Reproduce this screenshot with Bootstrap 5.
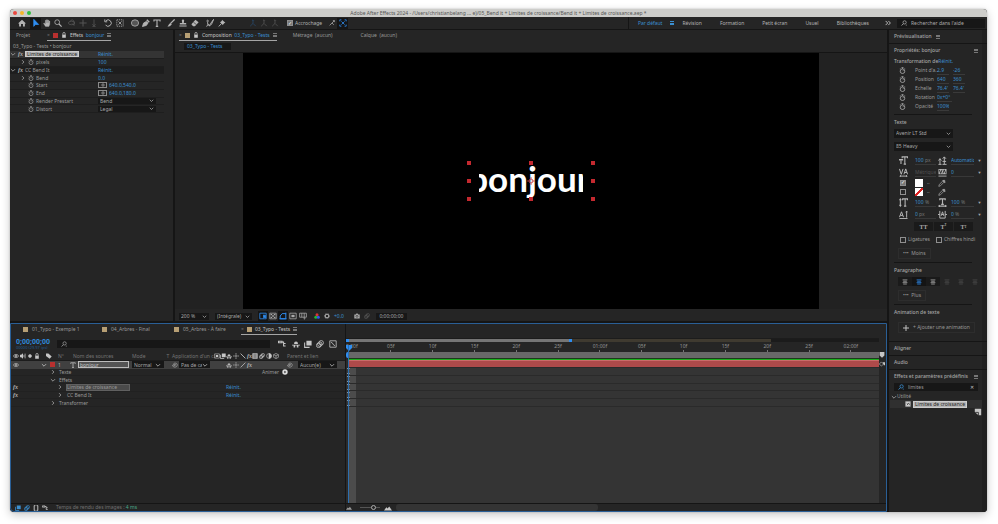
<!DOCTYPE html>
<html lang="fr">
<head>
<meta charset="utf-8">
<meta name="viewport" content="width=device-width, initial-scale=1">
<title>Adobe After Effects 2024</title>
<link href="https://cdn.jsdelivr.net/npm/bootstrap@5.3.0/dist/css/bootstrap.min.css" rel="stylesheet">
<style>
:root{--panel:#252525;--edge:#151515;--ink:#9a9a9a;--hi:#c6c6c6;--blue:#3b8fd0;--field:#171717}
html,body{height:100%}
body{background:#fff;padding:9px 11px 12px 10px;font:5px/7px "Noto Sans","Open Sans",sans-serif;color:var(--ink);overflow:hidden;white-space:nowrap}
button,input,select{font:inherit;color:inherit;background:none;border:0;padding:0;margin:0;border-radius:0;line-height:inherit}
button,.tool{display:inline-flex;align-items:center;justify-content:center}
a{color:inherit;text-decoration:none}
svg{width:8px;height:8px;fill:none;stroke:currentColor;stroke-width:1;flex:none;display:block}
svg.sm{width:6px;height:6px}
.window{height:100%;min-height:400px;border-radius:4px;overflow:hidden;background:var(--edge);box-shadow:0 0 2px rgba(0,0,0,.25),0 3px 10px rgba(0,0,0,.22)}
.titlebar{height:8px;background:#cdcdca;color:#555;line-height:8px;position:relative}
.lights{position:absolute;left:3px;top:2px;display:flex;gap:3px}
.lights i{width:4px;height:4px;border-radius:2px;background:#e9473f}
.lights i:nth-child(2){background:#f5b62b}
.lights i:nth-child(3){background:#2fbd3f}
.toolbar{height:12px;background:var(--panel);margin-bottom:1px;padding-left:6px;color:#b4b4b4}
.toolset{display:flex;margin-right:3px}
.tool{width:11px;height:11px}
.wide .tool{width:12px}
.tool.dim{color:#555}
.tool.on{background:var(--edge);color:#2f8df0}
.deep{color:#27496c}
.burger{width:4px;height:4px;color:#777;border-top:1px solid;border-bottom:1px solid;background:linear-gradient(currentColor,currentColor) center/4px 1px no-repeat;flex:none;display:inline-block}
.blue{color:var(--blue)}
.hi{color:var(--hi)}
.dimtext{color:#707070}
.tick{appearance:none;width:6px;height:6px;border:1px solid #8f8f8f;flex:none;display:flex;align-items:center;justify-content:center}
.tick:checked{background:#777}
.tick:checked::before{content:"✓";color:#fff;font:700 5px/5px "DejaVu Sans",sans-serif}
.workspaces{border-left:1px solid var(--edge);height:12px;padding-left:9px}
.workspaces a{margin-right:18px}
.workspaces a:last-child{margin-right:13px}
.helpbox{background:var(--field);width:88px;height:9px;color:#aaa;margin-right:2px}
.helpbox input,.finder input{width:100%;min-width:0;outline:0}
input::placeholder{color:inherit;opacity:1}
.desk{flex:1 1 0;min-height:0;display:grid;grid-template-columns:minmax(0,1fr) 98px;column-gap:2px}
.stage{display:grid;grid-template-rows:minmax(0,1fr) 189px;row-gap:2px;min-height:0}
.upper{display:grid;grid-template-columns:163px minmax(0,1fr);column-gap:2px;min-height:0}
.pane{background:var(--panel);min-height:0;min-width:0;overflow:hidden}
.tabs{height:11px;display:flex}
.tab-on{display:flex;align-items:center;gap:3px;color:var(--hi);border-bottom:1px solid #a5a5a5}
.swatch{width:5px;height:5px;background:#b79f74;flex:none}
.swatch.red{background:#b8302f}
.props{display:grid;grid-auto-rows:1fr;height:62px;margin-right:9px;line-height:6px}
.prop{display:grid;grid-template-columns:88px 1fr;align-items:center;border-bottom:1px solid #1e1e1e;min-height:0}
.prop.sel{background:#343434}
.prop.fxhead{background:#1d1d1d}
.prop > div{display:flex;align-items:center;gap:2px;min-height:0}
.prop .drop{height:6px}
.prop .chip{line-height:4px}
.chip{background:#b4b4b4;color:#262626;border:1px solid #ccc;padding:0 1px;line-height:5px}
.xy{width:9px;height:6px;border:1px solid #8a8a8a;color:#aaa}
.xy svg{width:4px;height:4px}
.num{color:var(--blue);width:30px}
.ind{padding-left:10px}
select{appearance:none;outline:0}
.drop{display:inline-flex;align-items:center;background:var(--field);color:#a8a8a8;height:7px;padding:0 2px}
.drop select{flex:1;min-width:0;width:100%}
.drop svg{width:5px;height:5px}
.crumb{height:12px;border-bottom:1px solid var(--edge);padding-left:9px}
.crumb a{background:var(--field);width:47px;padding-left:3px;height:7px}
.viewer{flex:1 1 0;min-height:0;padding:0 68px;background:#222}
.comp{background:#000;height:100%}
.picked{position:relative;width:124px;height:36px}
.picked > i{position:absolute;width:4px;height:4px;background:#c4292f;transform:translate(-50%,-50%)}
.word{width:104px;height:48px;overflow:hidden;display:flex;justify-content:center;padding-right:4px;font:700 35px/42px Lato,"Open Sans",sans-serif;color:#fff}
.viewbar{height:12px;padding:2px 0 0 4px;gap:6px;color:#aaa}
.timeline{background:var(--panel);border:1px solid #2a5f96;border-radius:0 0 0 4px;display:grid;grid-template-columns:335px minmax(0,1fr);min-height:0;overflow:hidden}
.tl-left,.tl-right{display:flex;flex-direction:column;min-width:0;min-height:0}
.tl-left{border-right:1px solid var(--edge)}
.tl-tabs{height:11px}
.tl-head{height:17px;padding-left:5px}
.timecode{font:700 7px/7px "Noto Sans",sans-serif;color:#2f87d6;width:41px}
.timecode small{display:block;font:400 4px/5px "Noto Sans",sans-serif;color:#245b8c}
.finder{background:var(--field);display:flex;align-items:center;height:8px;color:#999}
.cols{display:grid;grid-template-columns:30px 17px 12px 62px 32px 8px 38px 16px 61px minmax(0,1fr);align-items:center}
.cols > *{display:flex;align-items:center;min-width:0}
.cols svg{width:6px;height:6px;margin-right:1px}
.cols > :first-child{padding-left:2px}
.cols .swatch{margin-left:2px}
.colhead{height:8px;color:#757575}
.layers{display:grid;grid-auto-rows:1fr;height:47px;border-top:1px solid #1c1c1c;line-height:6px}
.layer{background:#404040;color:#b5b5b5}
.namebox{border:1px solid #bdbdbd;background:#555;width:51px;height:7px;color:#c8c8c8;padding-left:1px;line-height:5px}
.sub{display:flex;align-items:center;border-bottom:1px solid #212121;min-height:0}
.sub .fxc{width:34px;padding-left:2px;color:#b5b5b5}
.sub .nm{width:169px;display:flex;align-items:center;gap:3px;padding-left:5px}
.l2 .nm{padding-left:12px}
.l2 .nm b{font-weight:400;width:64px;padding-left:1px;line-height:6px}
.l2 .nm b.sel{background:#4a4a4a;border:1px solid #606060;padding-left:0;line-height:5px}
.fxf{font:italic 700 6px/6px "Liberation Serif",serif;color:#b5b5b5}
.tl-foot{height:8px;border-top:1px solid var(--edge);margin-top:auto}
.tl-right{position:relative}
.trackside{display:grid;grid-template-columns:minmax(0,1fr) 7px;flex:1 1 0;min-height:0}
.tracks{display:flex;flex-direction:column;position:relative;min-width:0}
.nav-range{height:4px;margin-top:14px;display:flex;border-top:1px solid #1c1c1c}
.nav-range i{height:3px}
.nr-a{width:42.4%;background:#757575;border-left:3px solid #2f8df0;border-right:3px solid #2f8df0}
.nr-b{width:37.4%;background:#3f3a30}
.nr-c{flex:1;background:#1b1b1b}
.ruler{height:10px;display:flex;overflow:hidden}
.ruler span{flex:0 0 7.85%;text-align:center;line-height:8px;color:#939393;background:linear-gradient(#777,#777) center bottom/1px 2px no-repeat}
.ruler span:first-child{margin-left:-18px;padding-left:18px;text-align:left}
.workarea{height:6px;background:#686868;border-left:2px solid #2f8df0;border-radius:2px 0 0 2px}
.cache{height:2px;background:#1dac1d;margin-left:3px;border-top:1px solid #1b3a1b}
.lanes{display:grid;grid-auto-rows:1fr;height:47px}
.lanebox{flex:1 1 0;background:linear-gradient(90deg,#2b2b2b 0 3px,#4c4c4c 3px 10px,#343434 10px)}
.lanes div{border-bottom:1px solid #2a2a2a;color:#9db7d0;display:flex;align-items:center;min-height:0}
.lanes .bar{background:#ae4a4a;border-top:1px solid #c96a6a;margin-left:3px}
.head{position:absolute;left:0;top:21px;bottom:0;width:5px}
.head::after{content:"";position:absolute;left:2px;top:0;bottom:0;width:1px;background:#2c6fb0}
.head::before{content:"";position:absolute;left:0;top:0;width:6px;height:6px;background:#2f8df0;clip-path:polygon(0 0,100% 0,100% 50%,50% 100%,0 50%)}
.scale{appearance:none;width:20px;height:5px;background:linear-gradient(#555,#555) center/100% 1px no-repeat}
.scale::-webkit-slider-thumb{appearance:none;width:5px;height:5px;border:1px solid #aaa;border-radius:3px;background:var(--panel)}
.scroller{width:202px;height:7px;background:#343434;border-radius:3px}
.side{display:flex;flex-direction:column;gap:1px;min-height:0}
.side section{background:var(--panel);border-right:5px solid #202020;padding-left:5px}
.side h2{font:500 5px/7px "Noto Sans",sans-serif;margin:0;color:#a6a6a6}
.bar-s{height:13px;display:flex;align-items:center}
.tf{display:grid;grid-template-columns:21px 22px 16px 16px;height:9px;align-items:center}
.tf svg{margin-left:5px;width:7px;height:7px;color:#aaa}
.tf input{width:12px;color:var(--blue);border-bottom:1px solid #3a3a3a;height:8px}
.sep{border-top:1px solid #151515;margin-right:10px}
.ch{display:grid;grid-template-columns:21px 22px 14px 24px 8px;height:12px;align-items:center}
.ch svg{width:9px;height:9px;color:#b5b5b5;margin-left:5px}
.ch svg:nth-of-type(2){margin-left:1px}
.ch .v{border-bottom:1px solid #383838;height:9px;line-height:8px;display:flex;color:#777;overflow:hidden;width:21px}
.ch .v + svg + .v{width:23px}
.ch .v input{color:var(--blue);width:100%;min-width:0}
.ch .v input.w3{width:10px}
.ch .v input.w1{width:4px}
.ch button{font-size:4px;color:#aaa;padding-left:1px}
.paint{display:flex;align-items:center;height:9px;padding-left:6px}
.paint i{width:8px;height:8px;background:#fff;margin:0 4px 0 9px}
.paint i.none{background:linear-gradient(to bottom right,#fff 42%,#d22 43% 57%,#fff 58%)}
.dk{background:#1a1a1a;color:#aaa;height:9px}
.caps button{width:19px;font:700 6px/8px "Liberation Serif",serif}
.caps sup,.caps sub{font-size:3px;line-height:3px}
.more{border:1px solid #2d2d2d;height:11px;padding:0 4px;color:#999}
.al{width:14px;height:9px}
.al.on{background:#141414;color:#2f8df0}
.al.off{color:#4a4a4a}
</style>
<script src="https://cdn.jsdelivr.net/npm/bootstrap@5.3.0/dist/js/bootstrap.bundle.min.js"></script>
</head>
<body>
<svg class="d-none" aria-hidden="true">
<symbol id="home" viewBox="0 0 10 10"><path d="M5 .8 0 5.6h1.4V9.5h2.4V6.4h2.4v3.1h2.4V5.6H10z" fill="currentColor" stroke="none"/></symbol>
<symbol id="arrow" viewBox="0 0 10 10"><path d="M2.200.4v8.800l2.300-2.400h3.800z" fill="currentColor"/></symbol>
<symbol id="hand" viewBox="0 0 10 10"><path d="M3.200 9.400.6 5.600l.9-.6L3 6.200V1.600h1v3h.4V.8h1.100v3.800h.4V1.300H7v3.500h.4V2.500h1.100V6.500L7.400 9.400z" fill="currentColor" stroke-width=".4"/></symbol>
<symbol id="mag" viewBox="0 0 10 10"><circle cx="4" cy="4" r="3"/><path d="m6.200 6.200 3.300 3.300" stroke-width="1.500"/></symbol>
<symbol id="find" viewBox="0 0 10 10"><circle cx="6" cy="4" r="2.700" stroke-width="1.300"/><path d="M4.200 6 1 9.200M8 8.500h1.500" stroke-width="1.500"/></symbol>
<symbol id="orbit" viewBox="0 0 10 10"><ellipse cx="4.500" cy="5" rx="4" ry="2.200"/><path d="M3 2.500C4 .5 7 .8 7.500 3v5L5 5.500"/></symbol>
<symbol id="move" viewBox="0 0 10 10"><path d="M5 .5v9M.5 5h9" stroke-width="1.300"/></symbol>
<symbol id="down" viewBox="0 0 10 10"><path d="M5 .5v8M3 6.500l2 2.200 2-2.200M3 9.500h4"/></symbol>
<symbol id="rot" viewBox="0 0 10 10"><path d="M2.300 2.200A4 4 0 1 1 2 7.600M1 .5v3h3" stroke-width="1.200"/></symbol>
<symbol id="cells" viewBox="0 0 10 10"><path d="M1 1h8v8H1z" stroke-dasharray="1.500 1"/><path d="M3 3l4 4M7 3 3 7"/></symbol>
<symbol id="ell" viewBox="0 0 10 10"><ellipse cx="5" cy="5" rx="4.500" ry="4" fill="#555"/></symbol>
<symbol id="pen" viewBox="0 0 10 10"><path d="M.5 9.500 2 5l3.500-2 2 2L5.500 8z" fill="currentColor"/><path d="m6 1 3 3" stroke-width="2"/></symbol>
<symbol id="type" viewBox="0 0 10 10"><path d="M1.200 3V1.300h7.600V3M5 1.300v7.900M3.500 9.200h3" stroke-width="1.400"/></symbol>
<symbol id="brush" viewBox="0 0 10 10"><path d="M9.500.5 4.500 5.500" stroke-width="1.600"/><path d="M4.500 5 6 6.500C4.500 9 2.500 9.500.5 9.300 2 8.500 2 6 4.500 5z" fill="currentColor" stroke="none"/></symbol>
<symbol id="stamp" viewBox="0 0 10 10"><path d="M3.500 2a1.500 1.500 0 0 1 3 0L6 5h3v2H1V5h3zM.5 8h9v1.300h-9z" fill="currentColor" stroke="none"/></symbol>
<symbol id="eraser" viewBox="0 0 10 10"><path d="m.5 6.500 5-5.500 4 3L5 9H2.500z" fill="currentColor" stroke="none"/><path d="m3 4 4 3.200" stroke="#242424" stroke-width=".8"/></symbol>
<symbol id="roto" viewBox="0 0 10 10"><circle cx="2" cy="2.500" r="1"/><path d="m2 4 .3 3L.8 9.500M2.300 6l2 3M9.500.5 5.500 6 4 8.500l2.800-1.700z" stroke-width="1.200"/></symbol>
<symbol id="pin" viewBox="0 0 10 10"><path d="m5 .8 4.200 4-1.500.4L6 7.500 2.500 4 4.700 2.400z" fill="currentColor" stroke="none"/><path d="M4.500 5.500 1 9.300" stroke-width="1.200"/></symbol>
<symbol id="axis" viewBox="0 0 10 10"><path d="M5 1v4.500M5 5.500 1.500 9M5 5.500 8.500 9M4 2l1-1 1 1"/></symbol>
<symbol id="snap" viewBox="0 0 10 10"><path d="M1 3V1h2M7 1h2v2M9 7v2H7M3 9H1V7M3 3l4 4M7 3 3 7"/></symbol>
<symbol id="magnet" viewBox="0 0 10 10"><path d="M1 9 5 5l3 3M5 5l4-4M6.500 1H9v2.500" stroke-width="1.200"/></symbol>
<symbol id="lock" viewBox="0 0 10 10"><path d="M2 4.500h6v5H2z" fill="currentColor" stroke="none"/><path d="M3.200 5V2.500a1.800 1.800 0 0 1 3.600 0V5" stroke-width="1.300"/></symbol>
<symbol id="watch" viewBox="0 0 10 10"><circle cx="5" cy="6" r="3.300" stroke-width="1.200"/><path d="M3.500.8h3M5 1v2M5 6l1.500-1.500M8 2l1 1M2 2 1 3"/></symbol>
<symbol id="cross" viewBox="0 0 10 10"><path d="M5 0v10M0 5h10" stroke-width="1.600"/></symbol>
<symbol id="cdown" viewBox="0 0 10 10"><path d="m1.500 3.500 3.500 3.500 3.500-3.500" stroke-width="1.500"/></symbol>
<symbol id="cright" viewBox="0 0 10 10"><path d="M3.500 2 6.500 5 3.500 8" stroke-width="1.500"/></symbol>
<symbol id="cam" viewBox="0 0 10 10"><path d="M.5 2.500H3L4 1h2l1 1.500h2.500v6.500h-9z" fill="currentColor" stroke="none"/><circle cx="5" cy="5.500" r="1.700" stroke="#242424"/></symbol>
<symbol id="gear" viewBox="0 0 10 10"><circle cx="5" cy="5" r="3" stroke-width="1.800"/><circle cx="5" cy="5" r="4.300" stroke-dasharray="1.500 1.200"/></symbol>
<symbol id="rgb" viewBox="0 0 10 10"><g stroke="none"><circle cx="5" cy="3" r="2.500" fill="#d33"/><circle cx="3" cy="7" r="2.500" fill="#2b3"/><circle cx="7.200" cy="7" r="2.500" fill="#35e"/></g></symbol>
<symbol id="grid" viewBox="0 0 10 10"><path d="M1 1.500h8v7H1z"/><path d="M2 2.500h2v1.500H2zM6 2.500h2v1.500H6zM4 4.200h2v1.600H4zM2 6h2v1.500H2zM6 6h2v1.500H6z" fill="currentColor" stroke="none"/></symbol>
<symbol id="mask" viewBox="0 0 10 10"><path d="M1.500 8.500V5L4 2h4.500v6.500zM.5 8.500h9M8.500.8v2" stroke-width="1.200"/></symbol>
<symbol id="fast" viewBox="0 0 10 10"><path d="M1 1.500h8v7H1z"/><path d="M5 4h3v3.500L7 6.500 5.500 8" fill="currentColor"/></symbol>
<symbol id="roi" viewBox="0 0 10 10"><path d="M1 1.500h8v7H1z"/><path d="M3 3.500h4v3H3z" fill="currentColor" stroke="none"/></symbol>
<symbol id="guide" viewBox="0 0 10 10"><path d="M.8 1.500h8.400v5H.8zM3.500 1.500v5M6.500 1.500V9L8 8"/></symbol>
<symbol id="eye" viewBox="0 0 10 10"><path d="M.5 5C3 1.500 7 1.500 9.500 5 7 8.500 3 8.500.5 5z" stroke-width="1.300"/><circle cx="5" cy="5" r="1.200" fill="currentColor"/></symbol>
<symbol id="spk" viewBox="0 0 10 10"><path d="M0 3h2l3-2.500v9L2 7H0z" fill="currentColor" stroke="none"/><path d="M6.500 3v4M8.500 1v8" stroke-width="1.200"/></symbol>
<symbol id="dot" viewBox="0 0 10 10"><circle cx="5" cy="5" r="2.500" fill="currentColor"/></symbol>
<symbol id="tag" viewBox="0 0 10 10"><path d="M0 1h4l5.500 5L6 9.500 0 5z" fill="currentColor" stroke="none"/></symbol>
<symbol id="shy" viewBox="0 0 10 10"><path d="M2.500 5a2.500 3 0 0 1 5 0zM0 6h10v1H0zM2 7h2v2.500H2zM6 7h2v2.500H6z" fill="currentColor" stroke="none"/></symbol>
<symbol id="sun" viewBox="0 0 10 10"><circle cx="5" cy="5" r="1.800"/><path d="M5 0v2M5 8v2M0 5h2M8 5h2"/></symbol>
<symbol id="anchor" viewBox="0 0 10 10"><circle cx="5" cy="5" r="2.500"/><path d="M5 0v4M5 6v4M0 5h4M6 5h4"/></symbol>
<symbol id="bs" viewBox="0 0 10 10"><path d="m1 1 8 8" stroke-width="1.400"/></symbol>
<symbol id="fs" viewBox="0 0 10 10"><path d="M9 1 1 9" stroke-width="1.400"/></symbol>
<symbol id="film" viewBox="0 0 10 10"><path d="M1 1h8v8H1z" fill="#777"/><path d="M3 1v8M7 1v8"/></symbol>
<symbol id="blur" viewBox="0 0 10 10"><circle cx="6.500" cy="3.500" r="2.800"/><circle cx="4.800" cy="5.200" r="2.800"/><circle cx="3.300" cy="6.700" r="2.800"/></symbol>
<symbol id="half" viewBox="0 0 10 10"><circle cx="5" cy="5" r="4"/><path d="M5 1a4 4 0 0 1 0 8z" fill="currentColor"/></symbol>
<symbol id="key" viewBox="0 0 10 10"><path d="M4 1.500 7.500 5 4 8.500.5 5z"/><path d="M6 2h4v5H8z" fill="currentColor" stroke="none"/></symbol>
<symbol id="cube" viewBox="0 0 10 10"><path d="m5 .8 4 2v4.400l-4 2-4-2V2.800zM1 2.800l4 2 4-2M5 4.800v4.400"/></symbol>
<symbol id="spiral" viewBox="0 0 10 10"><path d="M5 5.500a1 1 0 1 1 1-1c0 2-3.500 2.500-3.700 0C2 1 8.500.8 8.700 4.800 9 9.500 1 10 .8 5"/></symbol>
<symbol id="flow" viewBox="0 0 10 10"><path d="M.5 1.500H5v2H.5zM5 2.500h2v5h2.500M7 4.500h2.500" stroke-width="1.300"/></symbol>
<symbol id="frames" viewBox="0 0 10 10"><path d="M3 1h6.500v6H3z" fill="currentColor" stroke="none"/><path d="M.8 3v6.200H7" stroke-width="1.300"/></symbol>
<symbol id="graph" viewBox="0 0 10 10"><path d="M1 1h8v8H1zM2.500 3c3 0 2 4 5 4"/></symbol>
<symbol id="beam" viewBox="0 0 10 10"><path d="M2 .8h4M4 .8v8.400M2 9.200h4" stroke-width="1.600"/></symbol>
<symbol id="mount" viewBox="0 0 10 10"><path d="M0 8 3 4l1.500 1.500L6.500 3 10 8z" fill="currentColor" stroke="none"/></symbol>
<symbol id="flag" viewBox="0 0 10 10"><path d="M1 0h8v6L5 9.500 1 6z" fill="currentColor" stroke="none"/></symbol>
<symbol id="tt" viewBox="0 0 10 10"><path d="M3.500 2.500V1h6v1.500M6.500 1v8M5.200 9h2.600M.5 5V4h3.500v1M2.200 4v5" stroke-width="1.200"/></symbol>
<symbol id="lead" viewBox="0 0 10 10"><path d="M2.200 3v6M.6 5l1.600-2 1.600 2M.5 9.300h3.400M7 1v8M5.200 3 7 1l1.800 2M5 6h4M5 9.300h4.500" stroke-width="1.100"/></symbol>
<symbol id="kern" viewBox="0 0 10 10"><path d="M.5 1 2.500 7l2-6M5.500 7l2-6 2 6M6.200 5h2.600M1 9h8M2 8 1 9l1 1M8 8l1 1-1 1" stroke-width="1.100"/></symbol>
<symbol id="track" viewBox="0 0 10 10"><path d="M.5 1h9v6h-9z" fill="currentColor" stroke="none"/><path d="M1.500 2 3 6l1.500-4M5.500 6 7 2l1.500 4" stroke="#252525"/><path d="M.5 9h9"/></symbol>
<symbol id="drop" viewBox="0 0 10 10"><path d="M1 9.200 1.500 7 6 2.500 7.500 4 3 8.500z"/><path d="m6 1.500 3 3M7 3l1.500-1.500" stroke-width="2"/></symbol>
<symbol id="vs" viewBox="0 0 10 10"><path d="M1.500 1v8M.5 2.500 1.500 1l1 1.500M.5 7.500l1 1.500 1-1.500M4 2.500V1h5.500v1.500M6.800 1v8M5.500 9h2.600" stroke-width="1.200"/></symbol>
<symbol id="hs" viewBox="0 0 10 10"><path d="M2 2.500V1h6v1.500M5 1v6M3.500 7h3M1 9h8M2 8 1 9l1 1M8 8l1 1-1 1" stroke-width="1.300"/></symbol>
<symbol id="bl" viewBox="0 0 10 10"><path d="M8.500 1.500v7M.5 8 2.800 2l2.200 6M1.500 6h2.700M7.500 2.500l1-1.200 1 1.200M.5 9.500h9" stroke-width="1.100"/></symbol>
<symbol id="tsu" viewBox="0 0 10 10"><path d="M3.500 6.500 5 2l1.500 4.500M4 5h2M0 5l2 0M10 5H8M2 1v8M8 1v8M2 9h6" stroke-width="1.100"/></symbol>
<symbol id="brace" viewBox="0 0 10 10"><path d="M4 1H2v8h2M6 1h2v8H6" stroke-width="1.600"/></symbol>
<symbol id="lines" viewBox="0 0 10 10"><path d="M1 1.500h8M2 3.800h6M1 6.100h8M2 8.400h6" stroke-width="1.300"/></symbol>
<symbol id="preset" viewBox="0 0 10 10"><path d="M1 1h8v8H1z" fill="#ddd" stroke="#999"/><path d="M3 3l2 4M6 3l2 4M3 7l4-4" stroke="#333"/></symbol>
<symbol id="page" viewBox="0 0 10 10"><path d="M1 1h8v8H5.500L1 5z" fill="currentColor" stroke="none"/><path d="M1.500 5.500h4v4" stroke="#242424"/></symbol>
<symbol id="play" viewBox="0 0 10 10"><circle cx="5" cy="5" r="4.500" fill="#ddd" stroke="none"/><path d="m4 3 3 2-3 2z" fill="#222" stroke="none"/></symbol>
</svg>

<div class="window d-flex flex-column">
<header class="titlebar text-center">
  <div class="lights"><i></i><i></i><i></i></div>
  Adobe After Effects 2024 - /Users/christianbelang ... e)/05_Bend it + Limites de croissance/Bend it + Limites de croissance.aep *
</header>

<nav class="toolbar d-flex align-items-center" aria-label="Outils">
  <div class="toolset"><button class="tool" aria-label="Accueil"><svg><use href="#home"/></svg></button></div>
  <div class="toolset"><button class="tool on" aria-label="Sélection"><svg><use href="#arrow"/></svg></button><button class="tool" aria-label="Main"><svg><use href="#hand"/></svg></button><button class="tool" aria-label="Zoom"><svg><use href="#mag"/></svg></button></div>
  <div class="toolset"><button class="tool dim" aria-label="Orbite"><svg><use href="#orbit"/></svg></button><button class="tool dim" aria-label="Panoramique"><svg><use href="#move"/></svg></button><button class="tool dim" aria-label="Travelling"><svg><use href="#down"/></svg></button></div>
  <div class="toolset wide"><button class="tool" aria-label="Rotation"><svg><use href="#rot"/></svg></button><button class="tool" aria-label="Déplacement arrière"><svg><use href="#cells"/></svg></button></div>
  <div class="toolset"><button class="tool" aria-label="Ellipse"><svg><use href="#ell"/></svg></button><button class="tool" aria-label="Plume"><svg><use href="#pen"/></svg></button><button class="tool" aria-label="Texte"><svg><use href="#type"/></svg></button></div>
  <div class="toolset wide"><button class="tool" aria-label="Pinceau"><svg><use href="#brush"/></svg></button><button class="tool" aria-label="Tampon"><svg><use href="#stamp"/></svg></button><button class="tool" aria-label="Gomme"><svg><use href="#eraser"/></svg></button></div>
  <div class="toolset wide"><button class="tool" aria-label="Rotoscopie"><svg><use href="#roto"/></svg></button><button class="tool" aria-label="Marionnette"><svg><use href="#pin"/></svg></button></div>
  <div class="toolset deep ms-3"><button class="tool" aria-label="Axe local"><svg><use href="#axis"/></svg></button><button class="tool dim" aria-label="Axe universel"><svg><use href="#axis"/></svg></button><button class="tool dim" aria-label="Axe de vue"><svg><use href="#axis"/></svg></button></div>
  <label class="d-flex align-items-center ms-1" style="gap:2px"><input class="tick" type="checkbox" checked>Accrochage</label>
  <button class="tool ms-1" aria-label="Aimant"><svg class="sm"><use href="#magnet"/></svg></button><button class="tool on" aria-label="Repères"><svg><use href="#snap"/></svg></button>
  <div class="workspaces d-flex align-items-center ms-auto">
    <a href="#" class="blue me-0">Par défaut</a><span class="burger mx-2 blue"></span>
    <a href="#">Révision</a><a href="#">Formation</a><a href="#">Petit écran</a><a href="#">Usuel</a><a href="#">Bibliothèques</a>
  </div>
  <button class="tool hi me-1" aria-label="Plus d'espaces"><svg class="sm" viewBox="0 0 10 10"><path d="m1 1.500 3.500 3.500L1 8.500M5.500 1.500 9 5 5.500 8.500" stroke-width="1.500"/></svg></button>
  <label class="helpbox d-flex align-items-center gap-1 ps-1"><svg class="sm"><use href="#find"/></svg><input type="search" placeholder="Rechercher dans l'aide" aria-label="Rechercher dans l'aide"></label>
</nav>

<div class="desk">
<main class="stage">
  <div class="upper">
    <section class="pane">
      <div class="tabs align-items-stretch">
        <a href="#" class="d-flex align-items-center" style="width:37px;padding-left:6px">Projet</a>
        <div class="tab-on"><span class="dimtext">×</span><span class="swatch red"></span><svg class="sm"><use href="#lock"/></svg><span>Effets &nbsp;<span class="blue">bonjour</span></span><span class="burger"></span></div>
      </div>
      <div class="d-flex align-items-center" style="height:10px;padding-left:3px">03_Typo - Tests • bonjour</div>
      <div class="props">
        <div class="prop sel"><div><svg class="sm"><use href="#cdown"/></svg><span class="fxf">fx</span><span class="chip">Limites de croissance</span></div><div><button class="blue">Réinit.</button></div></div>
        <div class="prop"><div class="ind"><svg class="sm"><use href="#cright"/></svg><svg class="sm"><use href="#watch"/></svg>pixels</div><div><input class="num" value="100" aria-label="pixels"></div></div>
        <div class="prop fxhead"><div><svg class="sm"><use href="#cdown"/></svg><span class="fxf">fx</span><span class="ps-0">CC Bend It</span></div><div><button class="blue">Réinit.</button></div></div>
        <div class="prop"><div class="ind"><svg class="sm"><use href="#cright"/></svg><svg class="sm"><use href="#watch"/></svg>Bend</div><div><input class="num" value="0.0" aria-label="Bend"></div></div>
        <div class="prop"><div class="ind"><svg class="sm invisible"></svg><svg class="sm"><use href="#watch"/></svg>Start</div><div><button class="xy" aria-label="Choisir le point Start"><svg><use href="#cross"/></svg></button><input class="num" value="640.0,540.0" aria-label="Start"></div></div>
        <div class="prop"><div class="ind"><svg class="sm invisible"></svg><svg class="sm"><use href="#watch"/></svg>End</div><div><button class="xy" aria-label="Choisir le point End"><svg><use href="#cross"/></svg></button><input class="num" value="640.0,180.0" aria-label="End"></div></div>
        <div class="prop"><div class="ind"><svg class="sm invisible"></svg><svg class="sm"><use href="#watch"/></svg>Render Prestart</div><div><label class="drop" style="width:58px"><select aria-label="Render Prestart"><option>Bend</option></select><svg><use href="#cdown"/></svg></label></div></div>
        <div class="prop"><div class="ind"><svg class="sm invisible"></svg><svg class="sm"><use href="#watch"/></svg>Distort</div><div><label class="drop" style="width:58px"><select aria-label="Distort"><option>Legal</option></select><svg><use href="#cdown"/></svg></label></div></div>
      </div>
    </section>

    <section class="pane d-flex flex-column">
      <div class="tabs ps-1 align-items-stretch">
        <div class="tab-on"><span class="dimtext">×</span><span class="swatch"></span><svg class="sm"><use href="#lock"/></svg><span>Composition &nbsp;<span class="blue">03_Typo - Tests</span></span><span class="burger"></span></div>
        <a href="#" class="d-flex align-items-center ms-3">Métrage &nbsp;(aucun)</a>
        <a href="#" class="d-flex align-items-center ms-4 ps-1">Calque &nbsp;(aucun)</a>
      </div>
      <div class="crumb d-flex align-items-center"><a href="#" class="blue">03_Typo - Tests</a></div>
      <div class="viewer"><div class="comp d-flex align-items-center justify-content-center">
        <div class="picked d-flex align-items-center justify-content-center"><div class="word flex-shrink-0">bonjour</div>
          <i class="start-0 top-0"></i><i class="start-50 top-0"></i><i class="start-100 top-0"></i><i class="start-0 top-50"></i><i class="start-100 top-50"></i><i class="start-0 top-100"></i><i class="start-50 top-100"></i><i class="start-100 top-100"></i>
          <svg class="position-absolute top-50 start-50 translate-middle" style="color:#c0444c"><use href="#anchor"/></svg>
        </div></div></div>
      <div class="viewbar d-flex align-items-center">
        <label class="drop" style="width:30px"><select aria-label="Zoom"><option>200 %</option></select><svg><use href="#cdown"/></svg></label>
        <label class="drop" style="width:37px"><select aria-label="Résolution"><option>(Intégrale)</option></select><svg><use href="#cdown"/></svg></label>
        <div class="d-flex"><button class="tool on" style="width:10px" aria-label="Aperçu rapide"><svg><use href="#fast"/></svg></button><button class="tool" style="width:10px" aria-label="Transparence"><svg><use href="#grid"/></svg></button><button class="tool on" style="width:10px" aria-label="Masques"><svg><use href="#mask"/></svg></button><button class="tool" style="width:10px" aria-label="Zone cible"><svg><use href="#roi"/></svg></button><button class="tool" style="width:10px" aria-label="Grilles"><svg><use href="#guide"/></svg></button></div>
        <div class="d-flex align-items-center gap-1"><svg class="sm"><use href="#rgb"/></svg><svg class="sm"><use href="#gear"/></svg><span class="blue">+0.0</span></div>
        <div class="d-flex align-items-center gap-1 ps-1"><svg class="sm"><use href="#cam"/></svg><svg class="sm" style="color:#555"><use href="#blur"/></svg></div>
        <button class="drop" style="width:31px">0;00;00;00</button>
      </div>
    </section>
  </div>

  <section class="timeline">
    <div class="tl-left">
      <div class="tl-tabs d-flex align-items-stretch">
        <a href="#" class="d-flex align-items-center gap-1 ps-2 ms-1" style="width:87px"><span class="swatch"></span>01_Typo - Exemple 1</a>
        <a href="#" class="d-flex align-items-center gap-1" style="width:72px"><span class="swatch"></span>04_Arbres - Final</a>
        <a href="#" class="d-flex align-items-center gap-1" style="width:67px"><span class="swatch"></span>05_Arbres - À faire</a>
        <div class="tab-on"><span class="dimtext">×</span><span class="swatch"></span><span>03_Typo - Tests</span><span class="burger"></span></div>
      </div>
      <div class="tl-head d-flex align-items-center">
        <div class="timecode">0;00;00;00<small>00000 (29.97 ips)</small></div>
        <label class="finder ps-1" style="width:213px"><svg class="sm"><use href="#find"/></svg><input type="search" aria-label="Rechercher un calque"></label>
        <div class="d-flex flex-fill justify-content-between ps-2 pe-2 hi"><svg><use href="#flow"/></svg><span class="d-flex gap-1"><svg><use href="#shy"/></svg><svg><use href="#frames"/></svg><svg><use href="#blur"/></svg></span><svg><use href="#graph"/></svg></div>
      </div>
      <div class="cols colhead">
        <div class="hi"><svg><use href="#eye"/></svg><svg><use href="#spk"/></svg><svg><use href="#dot"/></svg><svg><use href="#lock"/></svg></div>
        <div class="justify-content-center hi"><svg><use href="#tag"/></svg></div>
        <div>N°</div><div style="padding-left:3px">Nom des sources</div><div>Mode</div><div class="justify-content-center">T</div><div>Application d'un c..</div>
        <div class="hi ps-1"><svg class="m-0"><use href="#roi"/></svg><svg class="m-0"><use href="#frames"/></svg></div>
        <div class="hi"><svg><use href="#shy"/></svg><svg><use href="#sun"/></svg><svg><use href="#bs"/></svg><span class="fxf pe-0">fx</span><svg><use href="#film"/></svg><svg><use href="#blur"/></svg><svg><use href="#half"/></svg><svg><use href="#cube"/></svg></div>
        <div>Parent et lien</div>
      </div>
      <div class="layers">
        <div class="cols layer">
          <div><svg><use href="#eye"/></svg></div>
          <div><svg><use href="#cdown"/></svg><span class="swatch red"></span></div>
          <div>1</div><div><svg style="margin-right:2px"><use href="#type"/></svg><input class="namebox" value="bonjour" aria-label="Nom du calque"></div>
          <div><label class="drop w-100"><select aria-label="Mode"><option>Normal</option></select><svg><use href="#cdown"/></svg></label></div><div></div>
          <div><svg><use href="#spiral"/></svg><label class="drop flex-fill"><select aria-label="Cache"><option>Pas de ca</option></select><svg class="m-0"><use href="#cdown"/></svg></label></div>
          <div></div><div><svg><use href="#shy"/></svg><svg><use href="#sun"/></svg><svg><use href="#fs"/></svg><span class="fxf">fx</span></div>
          <div><svg><use href="#spiral"/></svg><label class="drop" style="width:39px;margin-left:4px"><select aria-label="Parent"><option>Aucun(e)</option></select><svg class="m-0"><use href="#cdown"/></svg></label></div>
        </div>
        <div class="sub"><span class="fxc"></span><span class="nm"><svg class="sm"><use href="#cright"/></svg>Texte</span><span class="d-flex align-items-center ps-5" style="gap:3px">Animer<svg class="sm"><use href="#play"/></svg></span></div>
        <div class="sub"><span class="fxc"></span><span class="nm"><svg class="sm"><use href="#cdown"/></svg>Effets</span></div>
        <div class="sub l2"><span class="fxc fxf">fx</span><span class="nm"><svg class="sm"><use href="#cright"/></svg><b class="sel">Limites de croissance</b></span><button class="blue ms-2 ps-1">Réinit.</button></div>
        <div class="sub l2"><span class="fxc fxf">fx</span><span class="nm"><svg class="sm"><use href="#cright"/></svg><b>CC Bend It</b></span><button class="blue ms-2 ps-1">Réinit.</button></div>
        <div class="sub"><span class="fxc"></span><span class="nm"><svg class="sm"><use href="#cright"/></svg>Transformer</span></div>
      </div>
      <div class="tl-foot d-flex align-items-center ps-1">
        <div class="d-flex" style="gap:3px"><svg class="sm blue"><use href="#frames"/></svg><svg class="sm blue"><use href="#blur"/></svg><svg class="sm hi"><use href="#brace"/></svg><svg class="sm hi"><use href="#flow"/></svg></div>
        <span class="ms-2 dimtext">Temps de rendu des images : <span style="color:#4aa88a">4 ms</span></span>
      </div>
    </div>
    <div class="tl-right">
      <div class="trackside">
        <div class="tracks">
          <div class="nav-range"><i class="nr-a"></i><i class="nr-b"></i><i class="nr-c"></i></div>
          <div class="ruler"><span>0:00f</span><span>05f</span><span>10f</span><span>15f</span><span>20f</span><span>25f</span><span>01:00f</span><span>05f</span><span>10f</span><span>15f</span><span>20f</span><span>25f</span><span>02:00f</span></div>
          <div class="workarea"></div><div class="cache"></div>
          <div class="lanebox"><div class="lanes"><div class="bar"></div><div><svg class="sm"><use href="#beam"/></svg></div><div><svg class="sm"><use href="#beam"/></svg></div><div><svg class="sm"><use href="#beam"/></svg></div><div><svg class="sm"><use href="#beam"/></svg></div><div><svg class="sm"><use href="#beam"/></svg></div></div></div>
          <div class="head"></div>
        </div>
        <div class="d-flex flex-column hi" style="padding-top:28px;gap:3px"><svg class="sm"><use href="#flag"/></svg><svg class="sm"><use href="#key"/></svg></div>
      </div>
      <div class="tl-foot d-flex align-items-center gap-1"><svg class="sm"><use href="#mount"/></svg><input class="scale ms-1" type="range" value="70" aria-label="Échelle de temps"><svg class="hi"><use href="#mount"/></svg><span class="scroller"></span></div>
    </div>
  </section>
</main>

<aside class="side">
  <section class="bar-s"><h2>Prévisualisation</h2><span class="burger ms-1"></span></section>
  <section>
    <div class="d-flex align-items-center justify-content-between pe-1" style="height:13px"><h2>Propriétés: bonjour</h2><span class="burger"></span></div>
    <div class="d-flex align-items-center" style="height:9px"><h2>Transformation de</h2><button class="blue">Réinit.</button></div>
    <div class="tf"><svg><use href="#watch"/></svg><span>Point d'a..</span><input value="2.9" aria-label="Point d'ancrage X"><input value="-26" aria-label="Point d'ancrage Y"></div>
    <div class="tf"><svg><use href="#watch"/></svg><span>Position</span><input value="640" aria-label="Position X"><input value="360" aria-label="Position Y"></div>
    <div class="tf"><svg><use href="#watch"/></svg><span>Echelle</span><input value="76.4'" aria-label="Échelle X"><input value="76.4'" aria-label="Échelle Y"></div>
    <div class="tf"><svg><use href="#watch"/></svg><span>Rotation</span><input style="width:15px" value="0x+0°" aria-label="Rotation"></div>
    <div class="tf"><svg><use href="#watch"/></svg><span>Opacité</span><input value="100%" aria-label="Opacité"></div>
    <div class="sep" style="margin-top:3px"></div>
    <div class="d-flex align-items-center" style="height:14px"><h2>Texte</h2></div>
    <label class="drop d-flex" style="width:59px;height:9px"><select aria-label="Police"><option>Avenir LT Std</option></select><svg><use href="#cdown"/></svg></label>
    <label class="drop d-flex" style="width:59px;height:9px;margin:4px 0 3px"><select aria-label="Style"><option>85 Heavy</option></select><svg><use href="#cdown"/></svg></label>
    <div class="ch"><svg><use href="#tt"/></svg><label class="v"><input class="w3" value="100" aria-label="Corps">px</label><svg><use href="#lead"/></svg><label class="v"><input value="Automatiq" aria-label="Interligne"></label><button aria-label="Choix d'interligne">▼</button></div>
    <div class="ch"><svg><use href="#kern"/></svg><span class="v" style="color:#505050">Métrique</span><svg><use href="#track"/></svg><label class="v"><input value="0" aria-label="Approche"></label><button aria-label="Choix d'approche">▼</button></div>
    <div class="paint"><input class="tick" type="checkbox" checked aria-label="Fond"><i></i>..<svg class="ms-2"><use href="#drop"/></svg></div>
    <div class="paint"><input class="tick" type="checkbox" aria-label="Contour"><i class="none"></i>..<svg class="ms-2"><use href="#drop"/></svg></div>
    <div class="ch"><svg><use href="#vs"/></svg><label class="v"><input class="w3" value="100" aria-label="Échelle verticale">%</label><svg><use href="#hs"/></svg><label class="v"><input class="w3" value="100" aria-label="Échelle horizontale">%</label><button aria-label="Choix d'échelle">▼</button></div>
    <div class="ch"><svg><use href="#bl"/></svg><label class="v"><input class="w1" value="0" aria-label="Décalage">px</label><svg><use href="#tsu"/></svg><label class="v"><input class="w1" value="0" aria-label="Tsume">%</label><button aria-label="Choix de tsume">▼</button></div>
    <div class="d-flex caps" style="padding:2px 0 0 20px;gap:1px"><button class="dk">TT</button><button class="dk">T<sup>T</sup></button><button class="dk">T<sub>T</sub></button></div>
    <div class="d-flex align-items-center" style="height:17px;padding-left:6px;gap:6px"><label class="d-flex align-items-center" style="gap:2px"><input class="tick" type="checkbox">Ligatures</label><label class="d-flex align-items-center" style="gap:2px"><input class="tick" type="checkbox">Chiffres hindi</label></div>
    <div style="padding:0 0 3px 4px"><button class="more">••• &nbsp;Moins</button></div>
    <div class="sep"></div>
    <div class="d-flex align-items-center" style="height:14px"><h2>Paragraphe</h2></div>
    <div class="d-flex" style="padding-left:4px"><button class="al dk" aria-label="Gauche"><svg class="sm"><use href="#lines"/></svg></button><button class="al on" aria-label="Centre"><svg class="sm"><use href="#lines"/></svg></button><button class="al dk" aria-label="Droite"><svg class="sm"><use href="#lines"/></svg></button><button class="al off" aria-label="Justifier à gauche"><svg class="sm"><use href="#lines"/></svg></button><button class="al off" aria-label="Justifier au centre"><svg class="sm"><use href="#lines"/></svg></button><button class="al off" aria-label="Justifier à droite"><svg class="sm"><use href="#lines"/></svg></button></div>
    <div style="padding:4px 0 3px 4px"><button class="more">••• &nbsp;Plus</button></div>
    <div class="sep"></div>
    <div class="d-flex align-items-center" style="height:14px"><h2>Animation de texte</h2></div>
    <div style="padding:3px 0 8px 4px"><button class="more"><svg class="sm hi me-1"><use href="#cross"/></svg>+ Ajouter une animation</button></div>
  </section>
  <section class="bar-s"><h2>Aligner</h2></section>
  <section class="bar-s"><h2>Audio</h2></section>
  <section class="flex-fill">
    <div class="d-flex align-items-center justify-content-between pe-1" style="height:13px"><h2>Effets et paramètres prédéfinis</h2><span class="burger"></span></div>
    <label class="finder px-1 me-1 gap-1"><svg class="sm blue"><use href="#find"/></svg><input value="limites" aria-label="Rechercher un effet"><span class="hi">✕</span></label>
    <div class="d-flex align-items-end" style="height:9px"><svg class="sm" style="margin-left:-3px"><use href="#cdown"/></svg>Utilité</div>
    <div class="d-flex align-items-center" style="height:8px;background:#303030;gap:2px;margin-left:-4px;padding-left:15px"><svg class="sm"><use href="#preset"/></svg><span class="chip">Limites de croissance</span></div>
    <div class="d-flex justify-content-end hi"><svg><use href="#page"/></svg></div>
  </section>
</aside>
</div>
</div>
</body>
</html>
